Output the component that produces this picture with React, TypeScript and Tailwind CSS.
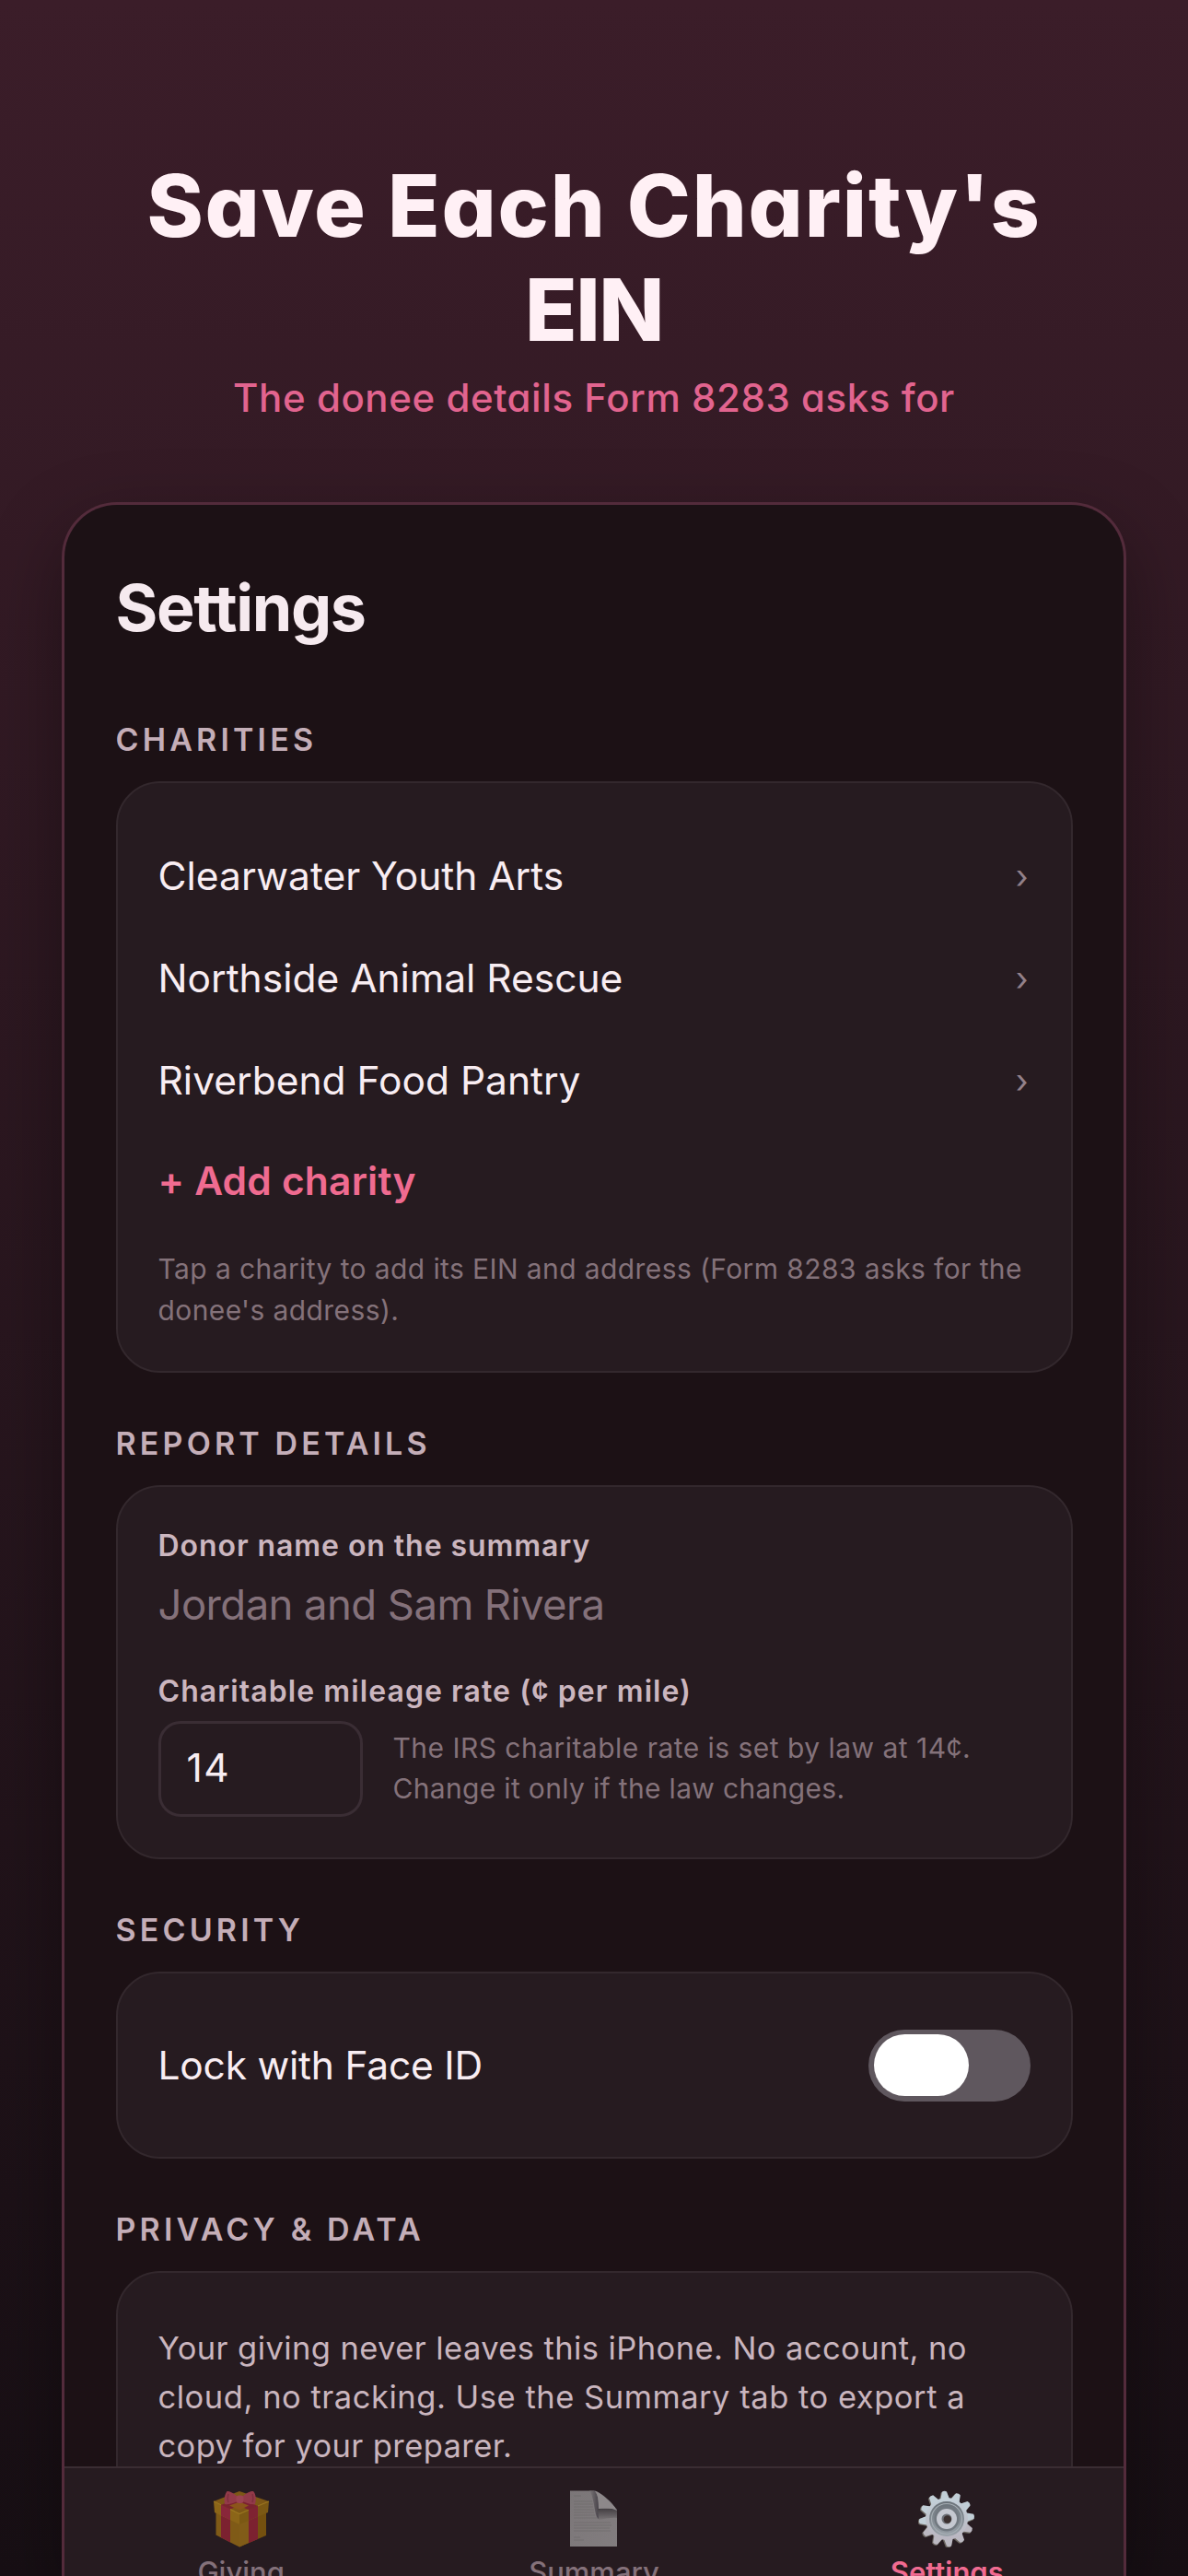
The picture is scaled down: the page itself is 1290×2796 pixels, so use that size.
import React from 'react';

interface Charity {
  id: string;
  name: string;
}

const charities: Charity[] = [
  { id: 'clearwater', name: 'Clearwater Youth Arts' },
  { id: 'northside', name: 'Northside Animal Rescue' },
  { id: 'riverbend', name: 'Riverbend Food Pantry' },
];

const gearTeeth = [0, 30, 60, 90, 120, 150, 180, 210, 240, 270, 300, 330];

function GiftIcon() {
  return (
    <svg viewBox="0 0 62 62" className="h-[62px] w-[62px] shrink-0">
      {/* box */}
      <path d="M3.5 20 29 32V61.5L3.5 48.5Z" fill="#7f5a17" />
      <path d="M29 32 58 20V49L29 61.5Z" fill="#74500f" />
      <path d="M29 32 39 28V57L29 61.5Z" fill="#815c18" />
      <path d="M9 22 19 27V56.5L9 51.3Z" fill="#7c2130" />
      <path d="M39 28 49 24V53L39 57.2Z" fill="#7c2130" />
      {/* lid */}
      <path d="M1 12 29 1 61 12 29 26Z" fill="#7d5716" />
      <path d="M1 12 29 25.5V37L2 24Z" fill="#8b6518" />
      <path d="M29 25.5 61 12 60 24 29 37Z" fill="#7b5814" />
      <path d="M9 15.8 19 20.6V32.2L9 27.3Z" fill="#89263a" />
      <path d="M39 21.3 49 17V28.5L39 32.8Z" fill="#7f2332" />
      <path d="M9 15.8 36 6 45 9 19 20.6Z" fill="#7b2230" />
      <path d="M49 17 22 6 14 10 39 21.3Z" fill="#7b2230" />
      <path d="M18 16.5 29 12.5 39 16.5 29 21.5Z" fill="#8b551b" />
      <path d="M19 20.6 29 25.5 39 21.3M1 12 9 15.8M49 17 61 12" fill="none" stroke="#9b7620" strokeWidth="1.2" />
      {/* bow */}
      <path d="M27 7C23 3 18 .5 15.5 1 13 4 12 10 13 15 17 16 23 13.5 27 12Z" fill="#923a49" />
      <path d="M32 7C36 3 41 .5 44 1 47 4 47.5 10 46 15 42 16 36 13.5 32 12Z" fill="#923a49" />
      <path d="M17 4C16 7 16 10 17 13M43 4C44 7 44 10 43 13" fill="none" stroke="#7e2e3d" strokeWidth="1.5" />
      <rect x="25.5" y="5.5" width="8" height="8.5" rx="3" fill="#9a4351" />
    </svg>
  );
}

function PageIcon() {
  return (
    <svg viewBox="0 0 51 62" className="h-[62px] w-[51px] shrink-0">
      <defs>
        <linearGradient id="page" x1="0" y1="0" x2="1" y2="1">
          <stop offset="0" stopColor="#7b7678" />
          <stop offset="1" stopColor="#827d7f" />
        </linearGradient>
        <linearGradient id="curl" x1="0" y1="0" x2="1" y2="0">
          <stop offset="0" stopColor="#7b7678" />
          <stop offset="1" stopColor="#48434a" />
        </linearGradient>
        <linearGradient id="fold" x1="0" y1="0" x2="0" y2="1">
          <stop offset="0" stopColor="#443f43" />
          <stop offset="1" stopColor="#787375" />
        </linearGradient>
      </defs>
      <path d="M0 .5H26C32 .5 51 17 51 24V61H0Z" fill="url(#page)" />
      <path d="M21 .5H26C29.5 3 31 8 31 19V31C26 28 27 8 21 .5Z" fill="url(#curl)" />
      <path d="M30 20H51V30C45 29 38 31 31 32Z" fill="url(#fold)" />
      <path d="M27 .6C35 4 49 17 51 22 45 19 38 18 31 20 31 12 30.5 5 27 .6Z" fill="#8d888a" />
      <path
        d="M4 6H12M4 12H24M4 15H25M4 18H25M4 21H26M4 24H26M4 27H27M4 30H30M4 35H44M4 38H45M4 41H43M4 44H44M4 51H11M4 54H15"
        stroke="#6f6a6c"
        strokeWidth=".7"
      />
    </svg>
  );
}

function GearIcon() {
  return (
    <svg viewBox="-31 -31 62 62" className="h-[62px] w-[62px] shrink-0">
      <defs>
        <linearGradient id="gear" x1="0" y1="0" x2="0" y2="1">
          <stop offset="0" stopColor="#c3d0d8" />
          <stop offset="1" stopColor="#bab6c0" />
        </linearGradient>
        <linearGradient id="dish" x1="0" y1="0" x2="0" y2="1">
          <stop offset="0" stopColor="#687077" />
          <stop offset="1" stopColor="#9aa2a9" />
        </linearGradient>
      </defs>
      {gearTeeth.map((angle) => (
        <path
          key={angle}
          d="M-5.5-21-3-29.5Q0-31.5 3-29.5L5.5-21Z"
          transform={`translate(-.8 .8) rotate(${angle - 5})`}
          fill="#6a655f"
        />
      ))}
      {gearTeeth.map((angle) => (
        <path
          key={angle}
          d="M-5-21-2.6-29.5Q0-31 2.6-29.5L5-21Z"
          transform={`rotate(${angle - 5})`}
          fill={angle > 90 && angle < 270 ? '#bbb8c1' : '#c1ced6'}
        />
      ))}
      <circle r="23" fill="url(#gear)" />
      <circle r="19" fill="url(#dish)" />
      <circle r="16.5" fill="none" stroke="#a5adb3" strokeWidth="1.2" />
      <circle r="13.5" fill="#727980" />
      <circle r="11" fill="#c5c8d0" />
      <circle r="5.5" fill="#6d7076" />
      <circle cx=".8" cy=".5" r="4.2" fill="#3b302f" />
    </svg>
  );
}

function SectionTitle({ children }: { children: React.ReactNode }) {
  return (
    <h2 className="mt-14 mb-6 text-[34px] leading-[42px] font-semibold tracking-[4.15px] text-[#c4aeb8] uppercase">
      {children}
    </h2>
  );
}

function Card({ children, className = '' }: { children: React.ReactNode; className?: string }) {
  return (
    <div className={`rounded-[48px] border-2 border-[#33282d] bg-[#261b20] px-11 ${className}`}>
      {children}
    </div>
  );
}

function TabItem({ icon, label, active = false }: { icon: React.ReactNode; label: string; active?: boolean }) {
  return (
    <button className="flex flex-1 flex-col items-center pt-6">
      {icon}
      <span
        className={`mt-2 text-[31px] leading-[38px] ${
          active ? 'font-semibold text-[#f16b91]' : 'font-medium text-[#84717a]'
        }`}
      >
        {label}
      </span>
    </button>
  );
}

export default function App() {
  return (
    <div className="flex h-[2796px] w-[1290px] flex-col overflow-hidden bg-gradient-to-b from-[#3b1d29] to-[#170f14] font-['Inter','Liberation_Sans',sans-serif]">
      <header className="pt-[167px] text-center [font-feature-settings:'cv11']">
        <h1 className="text-[93px] leading-[113px] font-extrabold text-[#fff0f5]">
          <span className="tracking-[1.8px]">Save Each Charity&apos;s</span>
          <br />
          <span className="tracking-[-1.5px]">EIN</span>
        </h1>
        <p className="mt-[9px] text-[42px] leading-[60px] font-medium tracking-[0.56px] text-[#e2648f]">
          The donee details Form 8283 asks for
        </p>
      </header>

      {/* Phone frame, runs off the bottom of the page */}
      <div className="mt-[83px] ml-[67px] flex min-h-0 w-[1156px] flex-1 flex-col overflow-hidden rounded-t-[60px] border-3 border-b-0 border-[#532b3b] bg-[#1c1115] shadow-[0_30px_80px_rgba(0,0,0,0.35)]">
        <main className="min-h-0 flex-1 overflow-hidden px-[55.5px] pt-[70px]">
          <h1 className="mb-20 text-[70px] leading-[84px] font-bold tracking-[-1.4px] text-[#f6eaef]">
            Settings
          </h1>

          <SectionTitle>Charities</SectionTitle>
          <Card className="pt-[45px] pb-11">
            {charities.map((charity) => (
              <div key={charity.id} className="flex h-[111px] items-center justify-between">
                <span className="text-[42.5px] text-[#f8edf2]">{charity.name}</span>
                <span className="pr-0.5 text-[36px] text-[#93818a]">›</span>
              </div>
            ))}
            <button className="mt-7 block text-[42.5px] leading-[52px] font-semibold tracking-[0.18px] text-[#ef6b90]">
              + Add charity
            </button>
            <p className="mt-[47px] text-[30px] leading-[44.5px] tracking-[0.4px] text-[#84727a]">
              Tap a charity to add its EIN and address (Form 8283 asks for the
              <br />
              donee&apos;s address).
            </p>
          </Card>

          <SectionTitle>Report details</SectionTitle>
          <Card className="pt-11 pb-11">
            <div className="text-[32px] leading-10 font-semibold tracking-[0.93px] text-[#cbb6bf]">
              Donor name on the summary
            </div>
            <div className="mt-4 text-[45.5px] leading-[56px] tracking-[-0.59px] text-[#84717a]">
              Jordan and Sam Rivera
            </div>
            <div className="mt-[46px] text-[32px] leading-10 font-semibold tracking-[1.07px] text-[#cbb6bf]">
              Charitable mileage rate (¢ per mile)
            </div>
            <div className="mt-3 flex items-center gap-[33px]">
              <div className="flex h-[104px] w-[222px] items-center rounded-3xl border-3 border-[#3a2d34] pb-0.5 pl-7 text-[42.5px] tracking-[1.5px] text-[#f8edf2]">
                14
              </div>
              <p className="pb-0.5 text-[30px] leading-[44.5px] tracking-[0.47px] text-[#84727a]">
                The IRS charitable rate is set by law at 14¢.
                <br />
                <span className="tracking-[0.33px]">Change it only if the law changes.</span>
              </p>
            </div>
          </Card>

          <SectionTitle>Security</SectionTitle>
          <Card className="flex h-[203px] items-center justify-between">
            <span className="text-[42.5px] tracking-[-0.22px] text-[#f8edf2]">Lock with Face ID</span>
            <div className="flex h-[78px] w-[176px] items-center rounded-full bg-[#5f575e] px-1.5">
              <div className="h-[67px] w-[103px] rounded-full bg-white" />
            </div>
          </Card>

          <SectionTitle>Privacy &amp; data</SectionTitle>
          <Card className="h-[400px] pt-[55px]">
            <p className="text-[34.5px] leading-[53px] tracking-[0.41px] text-[#c9b5be]">
              Your giving never leaves this iPhone. No account, no
              <br />
              <span className="tracking-[0.53px]">cloud, no tracking. Use the Summary tab to export a</span>
              <br />
              copy for your preparer.
            </p>
          </Card>
        </main>

        <nav className="flex h-[119px] shrink-0 border-t-2 border-[#3a2d33] bg-[#261b20]">
          <TabItem icon={<GiftIcon />} label="Giving" />
          <TabItem icon={<PageIcon />} label="Summary" />
          <TabItem icon={<GearIcon />} label="Settings" active />
        </nav>
      </div>
    </div>
  );
}
